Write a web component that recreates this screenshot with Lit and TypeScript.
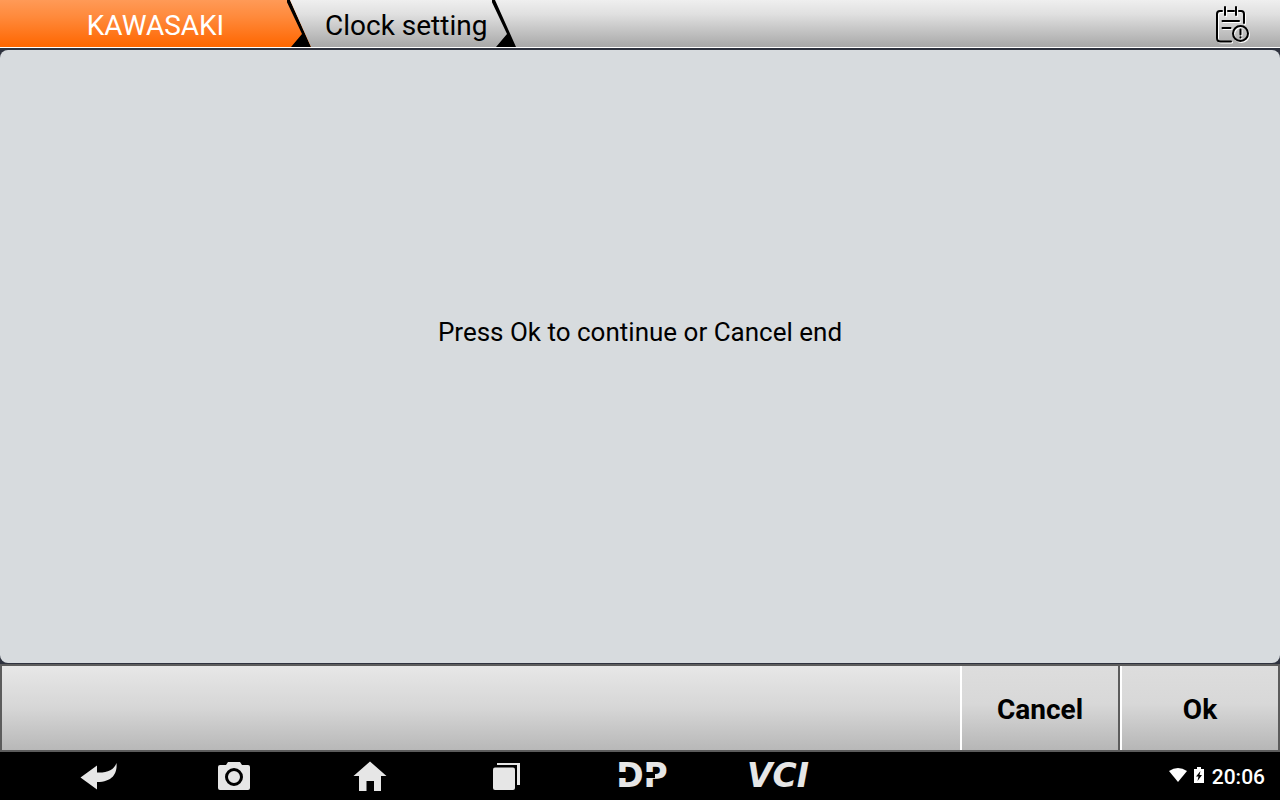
import { LitElement, html, css, svg } from "lit";
import { customElement, property } from "lit/decorators.js";

@customElement("crumb-bar")
class CrumbBar extends LitElement {
  static styles = css`
    :host { display: block; }
    .bar {
      display: flex; height: 47px; align-items: stretch;
      background: linear-gradient(#efefef, #e0e0e0 30%, #a8a8a8);
      border-bottom: 1px solid #fff;
      font-size: 28px; color: #000;
    }
    .tab {
      display: flex; align-items: center; justify-content: flex-end;
      text-decoration: none; color: inherit; line-height: 36px;
    }
    .tab svg { display: block; width: 24px; height: 47px; flex: none; }
    .tab span { padding-top: 4px; }
    .brand {
      width: 311px; color: #fff; justify-content: flex-start;
      background: linear-gradient(#ff9a57, #ff8a3c 35%, #ff6600);
      clip-path: polygon(0 0, calc(100% - 21px) 0, 100% 100%, 0 100%);
    }
    .brand span { flex: 1; text-align: center; padding-left: 24px; }
    .page { padding-left: 14px; gap: 5px; }
    .record {
      margin-left: auto; margin-right: 28px; padding: 0; border: 0;
      background: none; display: flex; align-items: center;
    }
    .record svg { width: 38px; height: 40px; display: block; }
  `;
  render() {
    const sep = html`<svg viewBox="0 0 24 47" aria-hidden="true"><path d="M-1 0H3L24 47H4L15 34Z" fill="#000"/></svg>`;
    return html`<header class="bar">
      <a class="tab brand" href="#brand"><span>KAWASAKI</span>${sep}</a>
      <a class="tab page" href="#clock"><span>Clock setting</span>${sep}</a>
      <button class="record" aria-label="Data record">
        <svg viewBox="0 0 38 40" fill="none" stroke-linecap="round" stroke-linejoin="round">
          ${["#ffffff", "#000000"].map((c, i) => svg`<g stroke=${c} stroke-width="2" transform=${i ? "" : "translate(1 1)"}>
            <path d="M8 7H6Q3 7 3 10V34Q3 37.500 6.500 37.500H17M14 7H20M25 7H27Q30 7 30 10V19M11 3V11M22 3V11M8.500 17H25M8.500 24H16.500"/>
            <circle cx="26.500" cy="29.500" r="7.500"/><path d="M26.500 25.500V30.500M26.500 33.300V33.600"/>
          </g>`)}
        </svg>
      </button>
    </header>`;
  }
}

@customElement("action-bar")
class ActionBar extends LitElement {
  static styles = css`
    :host { display: block; }
    .bar {
      display: flex; justify-content: flex-end; height: 84px;
      border: 2px solid #5c5c5c;
      background: linear-gradient(#e7e7e7, #d6d6d6 50%, #b8b8b8);
    }
    button {
      width: 158px; padding: 4px 0 0; border: 0; border-left: 2px solid #fff;
      background: linear-gradient(#dddddd, #d8d8d8 45%, #b6b6b6);
      font: bold 28px/34px Roboto, sans-serif; color: #000;
    }
    button + button { margin-left: 2px; box-shadow: -2px 0 #5c5c5c; }
  `;
  render() {
    return html`<div class="bar"><button>Cancel</button><button>Ok</button></div>`;
  }
}

@customElement("system-bar")
class SystemBar extends LitElement {
  static styles = css`
    :host { display: block; }
    nav {
      display: flex; align-items: center; justify-content: space-between;
      height: 48px; background: #000; color: #fff; padding-right: 15px;
    }
    .keys { display: flex; padding-left: 30px; }
    button {
      width: 136px; height: 48px; padding: 0; border: 0; background: none;
      display: flex; align-items: center; justify-content: center; color: #e6e6e6;
    }
    button svg { width: 40px; height: 32px; fill: #e6e6e6; }
    .mark {
      position: relative; font: bold 33px/48px "DejaVu Sans", sans-serif; height: 48px;
    }
    .slant { font-style: italic; }
    .cut::before, .cut::after {
      content: ""; position: absolute; left: 0; top: 20px;
      width: 10px; height: 6px; background: #000;
    }
    .cut::after { left: 29px; }
    .status { display: flex; align-items: center; font-size: 21px; line-height: 24px; font-weight: 500; }
    .wifi { width: 18px; height: 14px; margin-right: 7px; }
    .battery { width: 10px; height: 16px; margin: 0 8px 2px 0; }
    .wifi { margin-bottom: 2px; }
    time { padding-top: 2px; }
  `;
  render() {
    return html`<nav aria-label="System">
      <div class="keys">
        <button aria-label="Back"><svg viewBox="0 0 40 32"><path d="M2.500 17.500L19 5.500V12.500C29 13 36 10 38.500 3C39.500 14 34 22 19 22V29.500Z"/></svg></button>
        <button aria-label="Screenshot"><svg viewBox="0 0 40 32"><path fill-rule="evenodd" d="M14 2H26L28 5H34Q36 5 36 7V28Q36 30 34 30H6Q4 30 4 28V7Q4 5 6 5H12ZM20 8A9 9 0 1 0 20 26A9 9 0 1 0 20 8ZM20 11A6 6 0 1 1 20 23A6 6 0 1 1 20 11Z"/></svg></button>
        <button aria-label="Home"><svg viewBox="0 0 40 32"><path d="M20 1.500L36.500 16H31V31H24V21H16.500V31H9V16H3.500Z"/></svg></button>
        <button aria-label="Recent apps"><svg viewBox="0 0 40 32"><rect x="7" y="7.500" width="22" height="22.500" rx="2"/><path d="M11 3H34V25H31V5H11Z"/></svg></button>
        <button><span class="mark cut">DP</span></button>
        <button><span class="mark slant">VCI</span></button>
      </div>
      <div class="status">
        <svg class="wifi" viewBox="0 0 18 14" fill="#fff" aria-hidden="true"><path d="M0 3Q9 -3 18 3L9 14Z"/></svg>
        <svg class="battery" viewBox="0 0 10 16" aria-hidden="true"><path fill="#fff" d="M3 0H7V2H10V16H0V2H3Z"/><path fill="#000" d="M6.500 4L2 9.500H4.500L3.500 14L8 8H5.500Z"/></svg>
        <time>20:06</time>
      </div>
    </nav>`;
  }
}

@customElement("app-root")
class AppRoot extends LitElement {
  @property() message = "Press Ok to continue or Cancel end";
  static styles = css`
    :host {
      display: flex; flex-direction: column; min-height: 100vh;
      background: #2e323e; font-family: Roboto, sans-serif; color: #000;
    }
    main {
      flex: 1; margin: 2px 0 1px; padding-bottom: 49px; box-sizing: border-box;
      display: flex; align-items: center; justify-content: center;
      background: #d7dbde; border-radius: 8px;
    }
    p { margin: 0; font-size: 26px; line-height: 32px; text-align: center; }
  `;
  render() {
    return html`<crumb-bar></crumb-bar>
      <main><p>${this.message}</p></main>
      <action-bar></action-bar>
      <system-bar></system-bar>`;
  }
}
